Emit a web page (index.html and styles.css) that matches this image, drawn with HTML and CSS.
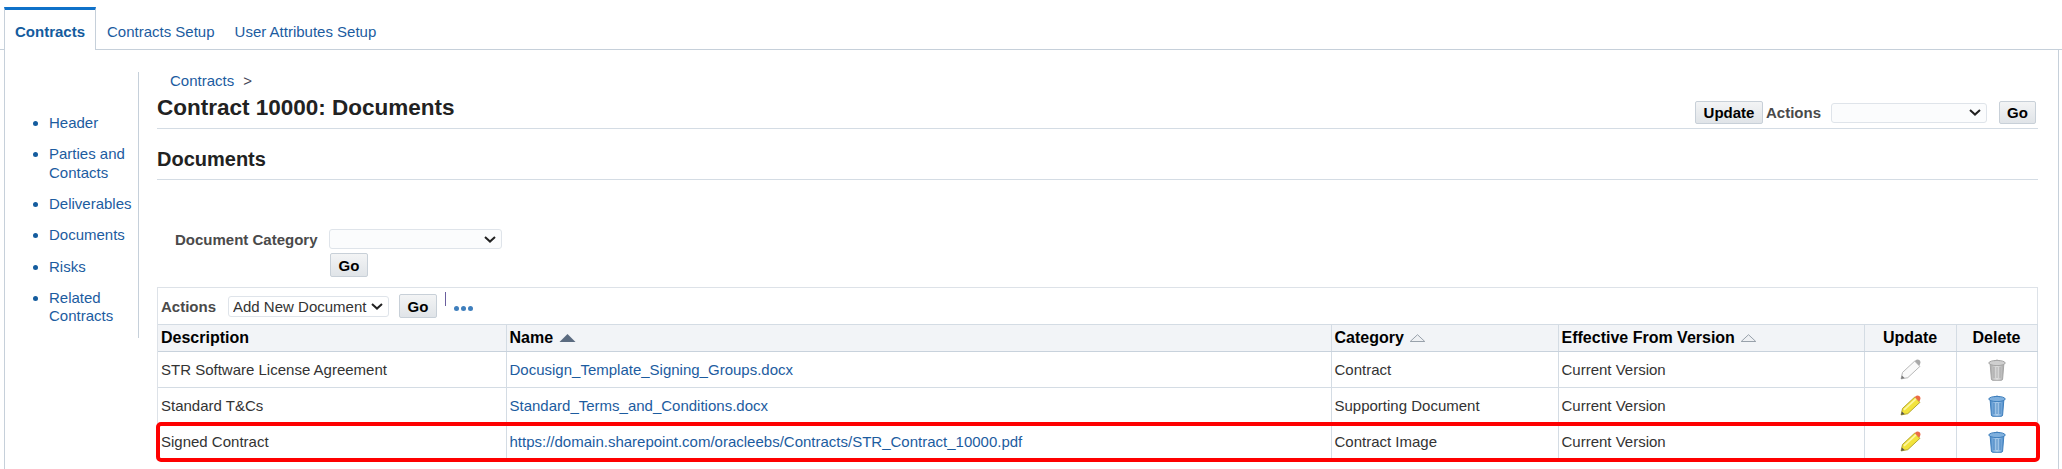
FILE: index.html
```html
<!DOCTYPE html>
<html lang="en">
<head>
<meta charset="utf-8">
<title>Contract 10000: Documents</title>
<link rel="stylesheet" href="styles.css">
</head>
<body>
<svg class="defs" width="0" height="0" aria-hidden="true">
  <defs>
    <linearGradient id="binBlue" x1="0" x2="1" y1="0" y2="0"><stop offset="0" stop-color="#4d8ccb"/><stop offset=".5" stop-color="#b5d3ee"/><stop offset="1" stop-color="#4d8ccb"/></linearGradient>
    <linearGradient id="binGrey" x1="0" x2="1" y1="0" y2="0"><stop offset="0" stop-color="#a9a9a9"/><stop offset=".5" stop-color="#e2e2e2"/><stop offset="1" stop-color="#a9a9a9"/></linearGradient>
    <symbol id="pencil" viewBox="0 0 20 20">
      <path d="M1 19 2.4 12.8 14 2 19 7 7.4 17.8Z" fill="#f2e33c" stroke="#a89a20" stroke-width=".8"/>
      <path d="M3.8 14.2 15.4 3.4" stroke="#fdf6a0" stroke-width="1.6"/>
      <path d="M14 2 15.6 .8Q17 0 18.4 1L19.2 2Q20 3.4 19 5L18 6.2Z" fill="#ec6b45"/>
      <path d="M1 19 1.8 15.6 4.4 18.1Z" fill="#555"/>
    </symbol>
    <symbol id="pencilOff" viewBox="0 0 20 20">
      <path d="M1 19 2.4 12.8 14 2 19 7 7.4 17.8Z" fill="#fafafa" stroke="#b4b4b4" stroke-width=".9"/>
      <path d="M14 2 15.6 .8Q17 0 18.4 1L19.2 2Q20 3.4 19 5L18 6.2Z" fill="#a8a8a8"/>
      <path d="M1 19 1.8 15.6 4.4 18.1Z" fill="#777"/>
    </symbol>
    <symbol id="bin" viewBox="0 0 18 22">
      <path d="M2.2 5.5 3.4 20Q3.5 21.3 5 21.3H13Q14.5 21.3 14.6 20L15.8 5.5Z" fill="url(#binBlue)" stroke="#3f7fbd"/>
      <path d="M6 8v11M9 8v11M12 8v11" stroke="#3f7fbd" stroke-width=".9"/>
      <ellipse cx="9" cy="4" rx="8.2" ry="2.6" fill="#7fb0de" stroke="#3f7fbd"/>
      <path d="M6.5 1.8Q9 .4 11.5 1.8" fill="none" stroke="#3f7fbd"/>
    </symbol>
    <symbol id="binOff" viewBox="0 0 18 22">
      <path d="M2.2 5.5 3.4 20Q3.5 21.3 5 21.3H13Q14.5 21.3 14.6 20L15.8 5.5Z" fill="url(#binGrey)" stroke="#a5a5a5"/>
      <path d="M6 8v11M9 8v11M12 8v11" stroke="#a5a5a5" stroke-width=".9"/>
      <ellipse cx="9" cy="4" rx="8.2" ry="2.6" fill="#cfcfcf" stroke="#a5a5a5"/>
      <path d="M6.5 1.8Q9 .4 11.5 1.8" fill="none" stroke="#a5a5a5"/>
    </symbol>
    <symbol id="sortOn" viewBox="0 0 17 8"><path d="M8.5 0 16.5 8H.5Z" fill="#5b6b80"/></symbol>
    <symbol id="sortOff" viewBox="0 0 17 8"><path d="M8.5 .7 15.8 7.5H1.2Z" fill="#eef0f3" stroke="#98a1ab"/></symbol>
  </defs>
</svg>

<nav class="tabs">
  <a class="tab tab-active" href="#">Contracts</a>
  <a class="tab" href="#">Contracts Setup</a>
  <a class="tab" href="#">User Attributes Setup</a>
</nav>

<div class="panel">
  <ul class="side">
    <li><a href="#">Header</a></li>
    <li><a href="#">Parties and Contacts</a></li>
    <li><a href="#">Deliverables</a></li>
    <li><a href="#">Documents</a></li>
    <li><a href="#">Risks</a></li>
    <li><a href="#">Related Contracts</a></li>
  </ul>

  <main class="main">
    <div class="crumbs"><a href="#">Contracts</a><span class="crumb-sep">&gt;</span></div>
    <div class="title-row">
      <h1>Contract 10000: Documents</h1>
      <div class="title-actions">
        <button class="btn btn-update" type="button">Update</button>
        <span class="label label-actions">Actions</span>
        <select class="sel sel-actions"><option></option></select>
        <button class="btn btn-go" type="button">Go</button>
      </div>
    </div>
    <h2>Documents</h2>

    <div class="filter">
      <div class="filter-row">
        <span class="label filter-label">Document Category</span>
        <select class="sel sel-category"><option></option></select>
      </div>
      <button class="btn btn-go btn-filter" type="button">Go</button>
    </div>

    <div class="table-wrap">
      <div class="toolbar">
        <span class="label">Actions</span>
        <select class="sel sel-add"><option>Add New Document</option></select>
        <button class="btn btn-go" type="button">Go</button>
        <span class="tool-sep"></span>
        <span class="dots"><i></i><i></i><i></i></span>
      </div>
      <table class="grid">
        <colgroup>
          <col class="c1"><col class="c2"><col class="c3"><col class="c4"><col class="c5"><col class="c6">
        </colgroup>
        <thead>
          <tr>
            <th>Description</th>
            <th>Name <svg class="sort"><use href="#sortOn"/></svg></th>
            <th>Category <svg class="sort"><use href="#sortOff"/></svg></th>
            <th>Effective From Version <svg class="sort"><use href="#sortOff"/></svg></th>
            <th class="ctr">Update</th>
            <th class="ctr">Delete</th>
          </tr>
        </thead>
        <tbody>
          <tr>
            <td>STR Software License Agreement</td>
            <td><a href="#">Docusign_Template_Signing_Groups.docx</a></td>
            <td>Contract</td>
            <td>Current Version</td>
            <td class="ctr"><svg class="ico-pencil"><use href="#pencilOff"/></svg></td>
            <td class="ctr"><svg class="ico-bin"><use href="#binOff"/></svg></td>
          </tr>
          <tr>
            <td>Standard T&amp;Cs</td>
            <td><a href="#">Standard_Terms_and_Conditions.docx</a></td>
            <td>Supporting Document</td>
            <td>Current Version</td>
            <td class="ctr"><svg class="ico-pencil"><use href="#pencil"/></svg></td>
            <td class="ctr"><svg class="ico-bin"><use href="#bin"/></svg></td>
          </tr>
          <tr>
            <td>Signed Contract</td>
            <td><a href="#">https://domain.sharepoint.com/oracleebs/Contracts/STR_Contract_10000.pdf</a></td>
            <td>Contract Image</td>
            <td>Current Version</td>
            <td class="ctr"><svg class="ico-pencil"><use href="#pencil"/></svg></td>
            <td class="ctr"><svg class="ico-bin"><use href="#bin"/></svg></td>
          </tr>
        </tbody>
      </table>
      <div class="highlight"></div>
    </div>
  </main>
</div>
</body>
</html>
```

FILE: styles.css
```css
* { box-sizing: border-box; }
html, body { margin: 0; height: 469px; overflow: hidden; background: #fff; }
body { font-family: "Liberation Sans", Arial, sans-serif; font-size: 15px; color: #333; }
a { color: #1c5c9f; text-decoration: none; }
.defs { display: block; height: 0; }

.tabs { display: flex; align-items: stretch; height: 50px; padding: 7px 0 0 4px; border-bottom: 1px solid #c6d0da; }
.tab { padding: 14px 10px 0; line-height: 22px; height: 42px; }
.tab-active { width: 92px; height: 43px; margin-right: 1px; padding: 11px 0 0 10px; border: 1px solid #c6d0da; border-top: 3px solid #0f71c9; border-bottom: 0; background: #fff; font-weight: bold; color: #145c9e; }

.panel { display: flex; align-items: flex-start; height: 419px; margin-left: 4px; width: 2055px; border-left: 1px solid #c6d0da; border-right: 1px solid #c6d0da; }

.side { width: 134px; height: 266px; margin: 22px 0 0; padding: 42px 0 0 44px; list-style: none; border-right: 1px solid #c6d0da; }
.side li { position: relative; margin-bottom: 12.8px; line-height: 18.5px; }
.side li::before { content: ""; position: absolute; left: -16px; top: 7px; width: 5px; height: 5px; border-radius: 50%; background: #145c9e; }

.main { width: 1881px; margin: 22px 0 0 18px; }
.crumbs { height: 19px; padding-left: 13px; line-height: 18px; }
.crumb-sep { margin-left: 9px; color: #445; }

.title-row { display: flex; justify-content: space-between; align-items: flex-start; height: 38px; border-bottom: 1px solid #d4dce4; }
h1 { margin: 0; padding-top: 4px; font-size: 22.5px; line-height: 25px; font-weight: bold; color: #222; }
.title-actions { display: flex; align-items: center; height: 23px; margin-top: 10px; margin-right: 2px; }

h2 { margin: 0; height: 51px; padding-top: 19px; border-bottom: 1px solid #d4dce4; font-size: 20px; line-height: 22px; font-weight: bold; color: #222; }

.btn { font: bold 15px "Liberation Sans", Arial, sans-serif; color: #000; padding: 0; height: 24px; border: 1px solid #c8d0d8; border-radius: 2px; background: linear-gradient(#f3f4f5, #e0e4e8); }
.btn-go { width: 38px; }
.btn-update { width: 68px; height: 23px; }
.label { font-weight: bold; color: #4a4a4a; }
.label-actions { margin-left: 3px; width: 65px; }
.title-actions .btn-go { width: 37px; height: 23px; margin-left: 12px; }

.sel { appearance: none; height: 20px; padding: 0 20px 0 4px; font: 15px "Liberation Sans", Arial, sans-serif; color: #333; background: #fbfcfd url("data:image/svg+xml,%3Csvg xmlns='http://www.w3.org/2000/svg' width='12' height='7'%3E%3Cpath d='M1 1l5 4.6L11 1' fill='none' stroke='%23222' stroke-width='2'/%3E%3C/svg%3E") no-repeat right 5px center; border: 1px solid #dfe4ea; border-radius: 3px; outline: 0; }
.sel-actions { width: 156px; }
.sel-category { width: 173px; }
.sel-add { width: 161px; height: 21px; margin-left: 12px; background-color: #fff; }

.filter { height: 107px; padding-top: 49px; }
.filter-row { display: flex; align-items: center; height: 20px; padding-left: 18px; }
.filter-label { width: 154px; }
.btn-filter { display: block; margin: 4px 0 0 173px; }

.table-wrap { position: relative; width: 1881px; border: 1px solid #dde2e8; border-bottom: 0; }
.toolbar { display: flex; align-items: flex-start; height: 36px; padding: 6px 0 0 3px; }
.toolbar .label { line-height: 26px; }
.toolbar .btn-go { margin-left: 10px; margin-top: 0; }
.toolbar .sel-add { margin-top: 2px; }
.tool-sep { width: 1px; height: 14px; margin: -2px 0 0 8px; background: #6a5f9e; }
.dots { display: flex; gap: 2px; margin: 12px 0 0 8px; }
.dots i { width: 5px; height: 5px; border-radius: 50%; background: #3f7fbd; }

.grid { width: 1879px; table-layout: fixed; border-collapse: collapse; }
.c1 { width: 348px; } .c2 { width: 825px; } .c3 { width: 227px; } .c4 { width: 306px; } .c5 { width: 92px; } .c6 { width: 81px; }
.grid th, .grid td { padding: 0 0 0 3px; border: 1px solid #d4dce4; text-align: left; vertical-align: middle; }
.grid tr > :first-child { border-left: 0; }
.grid th { height: 27px; background: #f2f4f7; color: #000; font-size: 16px; font-weight: bold; white-space: nowrap; border-bottom-color: #c8d2dc; }
.grid td { height: 36px; color: #333; }
.grid .ctr { text-align: center; padding: 0; }
.sort { width: 17px; height: 8px; margin-left: 1px; vertical-align: 1px; }
.ico-pencil { width: 21px; height: 21px; vertical-align: middle; }
.ico-bin { width: 18px; height: 22px; vertical-align: middle; }

.highlight { position: absolute; left: -2px; right: -3px; top: 134px; height: 40px; border: 4px solid #fe0000; border-radius: 5px; pointer-events: none; }
```
